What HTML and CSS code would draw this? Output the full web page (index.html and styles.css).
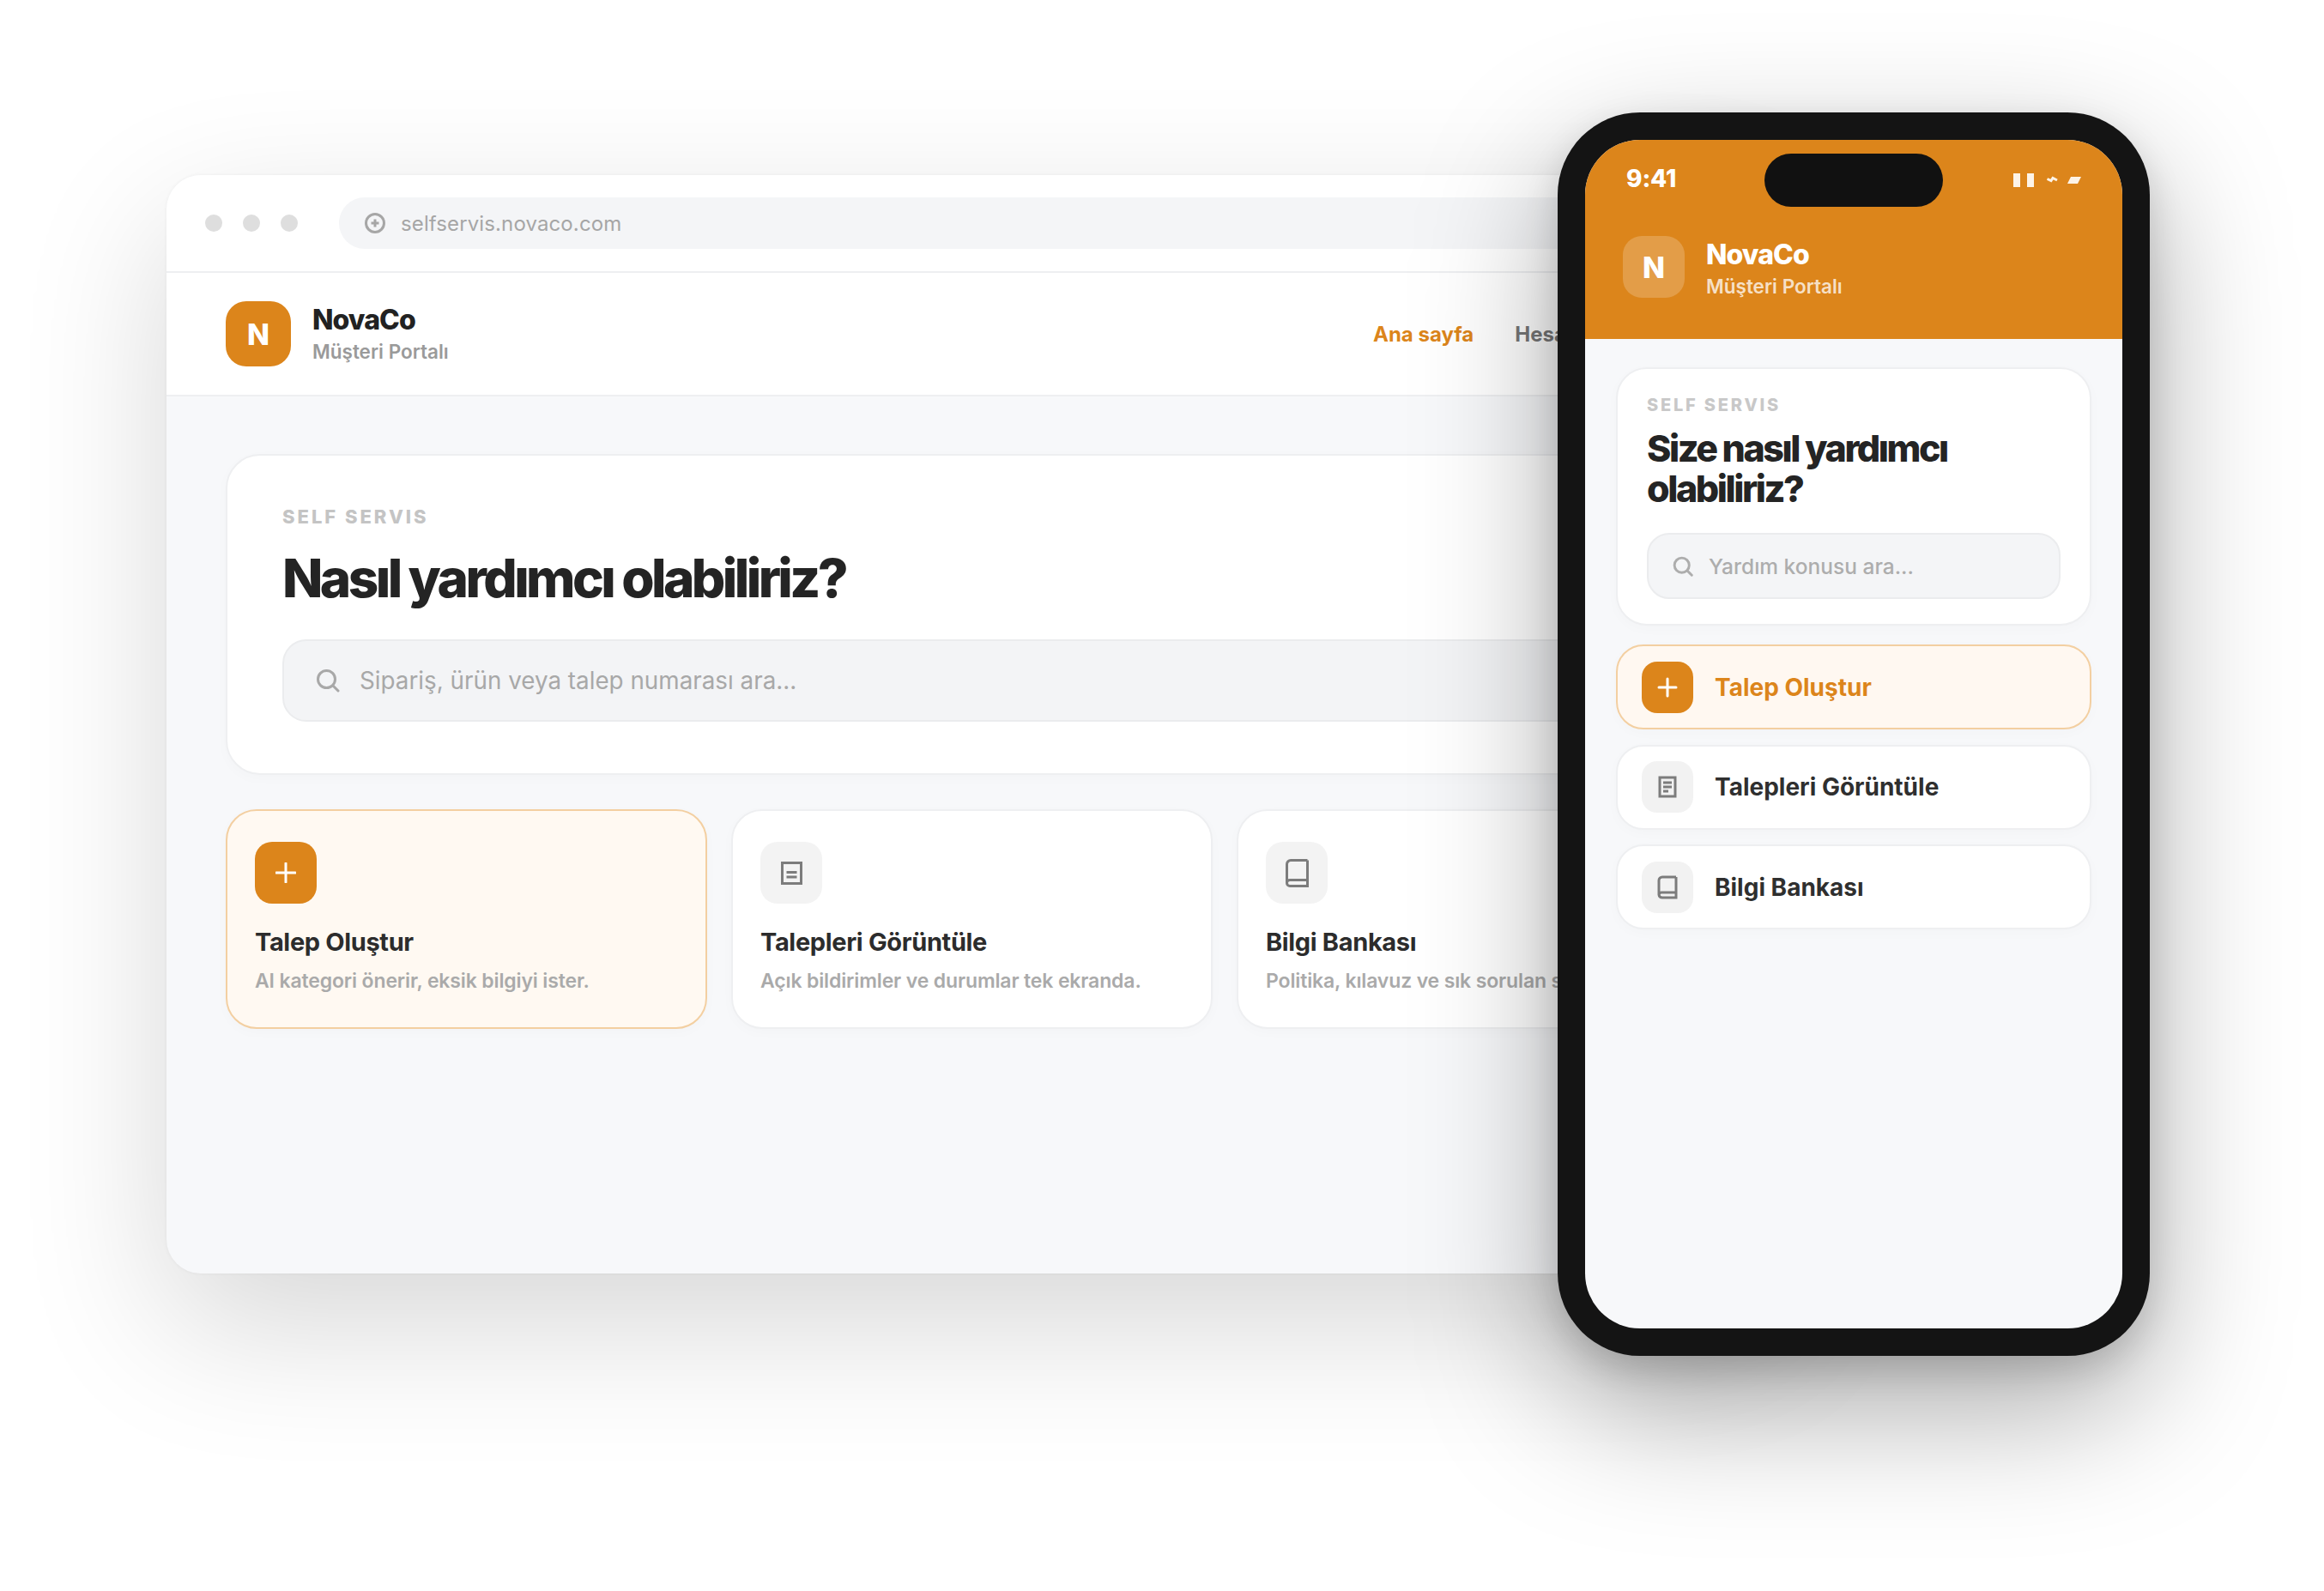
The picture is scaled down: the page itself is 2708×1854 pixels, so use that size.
FILE: index.html
```html
<!DOCTYPE html>
<html lang="tr">
<head>
<meta charset="utf-8">
<title>NovaCo Müşteri Portalı</title>
<link rel="stylesheet" href="styles.css">
</head>
<body>
<main class="stage">
  <section class="window">
    <div class="chrome">
      <div class="dots"><span class="dot"></span><span class="dot"></span><span class="dot"></span></div>
      <div class="url">
        <svg class="url-icon" viewBox="0 0 24 24"><circle cx="12" cy="12" r="10.5"/><path d="M12 7.500v9M7.500 12h9"/></svg>
        <span>selfservis.novaco.com</span>
      </div>
    </div>
    <nav class="nav">
      <div class="brand">
        <div class="logo">N</div>
        <div class="brand-text">
          <div class="brand-name">NovaCo</div>
          <div class="brand-sub">Müşteri Portalı</div>
        </div>
      </div>
      <div class="links"><span class="link active">Ana sayfa</span><span class="link">Hesap</span></div>
    </nav>
    <div class="content">
      <div class="hero">
        <div class="eyebrow">SELF SERVIS</div>
        <h1 class="title">Nasıl yardımcı olabiliriz?</h1>
        <div class="search">
          <svg class="search-icon" viewBox="0 0 28 28"><circle cx="12.500" cy="12.500" r="10"/><path d="M20 20l6 6"/></svg>
          <span>Sipariş, ürün veya talep numarası ara...</span>
        </div>
      </div>
      <div class="cards">
        <article class="card card-on">
          <div class="tile tile-on"><svg class="plus" viewBox="0 0 24 24"><path d="M12 1v22M1 12h22"/></svg></div>
          <h2 class="card-title">Talep Oluştur</h2>
          <p class="card-desc">AI kategori önerir, eksik bilgiyi ister.</p>
        </article>
        <article class="card">
          <div class="tile"><svg class="glyph" width="25" height="27" viewBox="0 0 25 27"><path d="M1.500 1.500h22v24h-22zM6.500 12.500h12M6.500 18h12"/></svg></div>
          <h2 class="card-title">Talepleri Görüntüle</h2>
          <p class="card-desc">Açık bildirimler ve durumlar tek ekranda.</p>
        </article>
        <article class="card">
          <div class="tile"><svg class="glyph" width="27" height="33" viewBox="0 0 27 33"><path d="M25.500 1.500H6A4.500 4.500 0 0 0 1.500 6v22M25.500 1.500v30H5A3.500 3.500 0 0 1 1.500 28 3.500 3.500 0 0 1 5 24.500h20.500"/></svg></div>
          <h2 class="card-title">Bilgi Bankası</h2>
          <p class="card-desc">Politika, kılavuz ve sık sorulan sorular.</p>
        </article>
      </div>
    </div>
  </section>

  <section class="phone">
    <div class="screen">
      <div class="island"></div>
      <header class="p-head">
        <div class="status">
          <span class="time">9:41</span>
          <svg class="status-icons" width="80" height="16" viewBox="0 0 80 16"><path d="M0 0h8v16H0zM16 0h8v16h-8zM63 12l4-8h12l-4 8z"/><path class="bolt" d="M39.500 6.500l4.500 2 2-3 5 2.500"/></svg>
        </div>
        <div class="p-brand">
          <div class="p-logo">N</div>
          <div class="brand-text p-text">
            <div class="brand-name p-name">NovaCo</div>
            <div class="brand-sub p-sub">Müşteri Portalı</div>
          </div>
        </div>
      </header>
      <div class="p-body">
        <div class="p-hero">
          <div class="p-eyebrow">SELF SERVIS</div>
          <h2 class="p-title">Size nasıl yardımcı olabiliriz?</h2>
          <div class="p-search">
            <svg class="p-search-icon" viewBox="0 0 28 28"><circle cx="12.500" cy="12.500" r="10"/><path d="M20 20l6 6"/></svg>
            <span>Yardım konusu ara...</span>
          </div>
        </div>
        <div class="p-list">
          <div class="p-item p-item-on">
            <div class="p-tile tile-on"><svg class="p-plus" viewBox="0 0 24 24"><path d="M12 2v20M2 12h20"/></svg></div>
            <span class="p-label p-label-on">Talep Oluştur</span>
          </div>
          <div class="p-item">
            <div class="p-tile"><svg class="glyph" width="22" height="26" viewBox="0 0 22 26"><path d="M2 2h18v22H2zM6 8h10M6 13h10M6 18h6"/></svg></div>
            <span class="p-label">Talepleri Görüntüle</span>
          </div>
          <div class="p-item">
            <div class="p-tile"><svg class="glyph" width="24" height="28" viewBox="0 0 24 28"><path d="M22 2H6a4 4 0 0 0-4 4v17M22 2v24H6a4 4 0 0 1-4-3.500A3.500 3.500 0 0 1 6 20h16"/></svg></div>
            <span class="p-label">Bilgi Bankası</span>
          </div>
        </div>
      </div>
    </div>
  </section>
</main>
</body>
</html>
```

FILE: styles.css
```css
* { box-sizing: border-box; }
html, body { margin: 0; background: #fff; }
body { font-family: Inter, "Noto Sans", sans-serif; color: #242424; }
h1, h2, p { margin: 0; }

.stage { position: relative; width: 2708px; height: 1854px; overflow: hidden; background: #fff; }

/* Browser window */
.window {
  position: absolute; left: 194px; top: 204px; width: 1880px; height: 1280px;
  display: flex; flex-direction: column;
  background: #f7f8fa; border-radius: 40px; overflow: hidden;
  box-shadow: 0 60px 170px rgba(0,0,0,.16), 0 0 4px rgba(0,0,0,.05);
}
.chrome {
  height: 114px; flex: none; display: flex; align-items: center; gap: 48px;
  padding: 0 0 0 45px; background: #fff; border-bottom: 2px solid #eeeff1;
}
.dots { display: flex; gap: 24px; }
.dot { width: 20px; height: 20px; border-radius: 50%; background: #dedede; }
.url {
  flex: 1; height: 60px; margin-right: 60px; padding-left: 30px;
  display: flex; align-items: center; gap: 18px;
  background: #f4f5f7; border-radius: 30px;
  font-size: 24px; letter-spacing: .005em; color: #a6a6a6;
}
.url-icon { width: 24px; height: 24px; fill: none; stroke: #a6a6a6; stroke-width: 3; }

.nav {
  height: 144px; flex: none; display: flex; align-items: center;
  padding: 0 0 0 69px; background: #fff; border-bottom: 2px solid #eeeff1;
}
.brand { display: flex; align-items: center; gap: 25px; width: 1337px; }
.logo {
  width: 76px; height: 76px; border-radius: 24px; background: #dc851b; color: #fff;
  display: flex; align-items: center; justify-content: center;
  font-size: 34px; font-weight: 800;
}
.brand-text { display: flex; flex-direction: column; gap: 4px; }
.brand-name { font-size: 32px; line-height: 38px; font-weight: 800; letter-spacing: -.03em; color: #222; }
.brand-sub { font-size: 22.500px; line-height: 28px; font-weight: 600; color: #9a9a9a; }
.links { display: flex; gap: 48px; }
.link { font-size: 24px; font-weight: 700; color: #777; }
.active { color: #dc851b; }

.content { flex: 1; padding: 67px 69px 0; display: flex; flex-direction: column; gap: 40px; }
.hero {
  height: 374px; padding: 58px 64px 0; background: #fff;
  border: 2px solid #eeeff1; border-radius: 40px;
  box-shadow: 0 4px 16px rgba(0,0,0,.02);
}
.eyebrow { font-size: 22px; line-height: 26px; font-weight: 800; letter-spacing: .135em; color: #c4c4c4; }
.title { margin-top: 21px; font-size: 62px; line-height: 76px; font-weight: 800; letter-spacing: -.058em; color: #242424; }
.search {
  margin-top: 33px; height: 96px; padding-left: 37px; display: flex; align-items: center; gap: 23px;
  background: #f3f4f6; border: 2px solid #ebecee; border-radius: 28px;
  font-size: 27.800px; color: #a8a8a8;
}
.search-icon { width: 28px; height: 28px; fill: none; stroke: #a8a8a8; stroke-width: 3; stroke-linecap: round; }

.cards { display: grid; grid-template-columns: repeat(3, 561px); gap: 28px; }
.card {
  height: 256px; padding: 36px 32px 0; background: #fff;
  border: 2px solid #eeeff1; border-radius: 36px;
  box-shadow: 0 4px 16px rgba(0,0,0,.02);
}
.card-on { background: #fff9f2; border-color: #f3cfa1; }
.tile {
  width: 72px; height: 72px; border-radius: 20px; background: #f3f3f3;
  display: flex; align-items: center; justify-content: center;
}
.tile-on { background: #dc851b; }
.plus { width: 24px; height: 24px; fill: none; stroke: #fff; stroke-width: 3; stroke-linecap: round; }
.glyph { fill: none; stroke: #7c7c7c; stroke-width: 3; }
.card-title { margin-top: 27px; font-size: 29px; line-height: 36px; font-weight: 700; letter-spacing: -.012em; color: #2c2c2c; }
.card-desc { margin-top: 12px; font-size: 23px; line-height: 30px; font-weight: 600; letter-spacing: -.006em; color: #aaa; white-space: nowrap; }

/* Phone */
.phone {
  position: absolute; left: 1815px; top: 131px; width: 690px; height: 1449px;
  padding: 32px; background: #141414; border-radius: 96px;
  box-shadow: 0 60px 160px rgba(0,0,0,.34), 0 16px 40px rgba(0,0,0,.14);
}
.screen { position: relative; height: 100%; display: flex; flex-direction: column; background: #f7f8fa; border-radius: 64px; overflow: hidden; }
.island { position: absolute; left: 209px; top: 16px; width: 208px; height: 62px; border-radius: 31px; background: #111; }
.p-head { height: 232px; flex: none; padding: 30px 47px 0 48px; background: #dc851b; color: #fff; }
.status { display: flex; justify-content: space-between; align-items: center; height: 30px; }
.time { font-size: 28px; font-weight: 800; letter-spacing: -.005em; color: #fff; }
.status-icons { fill: #fdf3e7; position: relative; top: 2px; }
.bolt { fill: none; stroke: #fdf3e7; stroke-width: 3; }
.p-brand { margin-top: 51px; margin-left: -4px; display: flex; align-items: center; gap: 25px; }
.p-logo {
  width: 72px; height: 72px; border-radius: 22px; background: rgba(255,255,255,.2); color: #fff;
  display: flex; align-items: center; justify-content: center; font-size: 34px; font-weight: 800;
}
.p-text { padding-top: 4px; }
.p-name { color: #fff; }
.p-sub { color: rgba(255,255,255,.75); }

.p-body { flex: 1; padding: 33px 36px 0; display: flex; flex-direction: column; gap: 22px; }
.p-hero {
  height: 301px; padding: 30px 34px 0; background: #fff;
  border: 2px solid #eeeff1; border-radius: 36px;
  box-shadow: 0 4px 16px rgba(0,0,0,.02);
}
.p-eyebrow { font-size: 20px; line-height: 24px; font-weight: 800; letter-spacing: .14em; color: #c8c8c8; }
.p-title { margin-top: 15px; font-size: 43px; line-height: 47px; font-weight: 800; letter-spacing: -.057em; color: #242424; width: 420px; }
.p-search {
  margin-top: 28px; height: 77px; padding-left: 28px; display: flex; align-items: center; gap: 18px;
  background: #f4f5f7; border: 2px solid #ebecee; border-radius: 26px;
  font-size: 24.500px; font-weight: 500; color: #adadad;
}
.p-search-icon { width: 24px; height: 24px; fill: none; stroke: #adadad; stroke-width: 3.400; stroke-linecap: round; }
.p-list { display: flex; flex-direction: column; gap: 17.500px; }
.p-item {
  height: 99px; padding-left: 28px; display: flex; align-items: center; gap: 25px;
  background: #fff; border: 2px solid #eeeff1; border-radius: 32px;
  box-shadow: 0 4px 16px rgba(0,0,0,.02);
}
.p-item-on { background: #fff8f1; border-color: #f3cfa1; }
.p-tile { width: 60px; height: 60px; flex: none; border-radius: 18px; background: #f2f2f2; display: flex; align-items: center; justify-content: center; }
.p-tile.tile-on { background: #dc851b; }
.p-plus { width: 24px; height: 24px; fill: none; stroke: #fff; stroke-width: 3; stroke-linecap: round; }
.p-label { font-size: 28px; font-weight: 700; color: #2f2f2f; }
.p-label-on { color: #dc851b; }
```
